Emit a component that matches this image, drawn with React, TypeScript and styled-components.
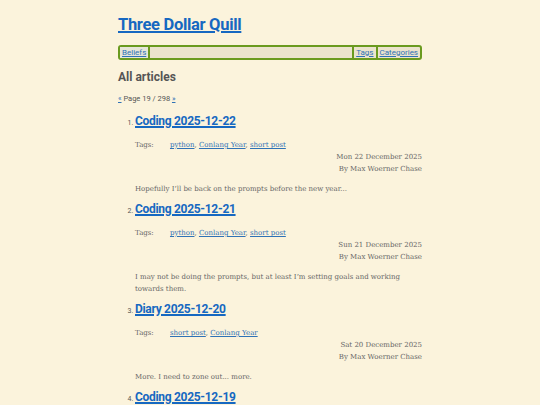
import React from 'react';
import styled, { createGlobalStyle } from 'styled-components';

const GlobalStyle = createGlobalStyle`
  html, body {
    margin: 0;
    padding: 0;
    background: #fbf3dc;
  }
  body {
    font-family: "DejaVu Serif", serif;
    color: #555;
  }
`;

const Page = styled.div`
  width: 304px;
  margin: 0 auto;
  padding-top: 14px;
`;

const SiteTitle = styled.h1`
  margin: 0;
  font-family: Roboto, "Open Sans", sans-serif;
  font-size: 16.5px;
  letter-spacing: -0.3px;
  line-height: 22px;
  font-weight: 700;
  a {
    color: #1668c1;
    text-decoration: underline;
    text-decoration-thickness: 2px;
  }
`;

const NavBar = styled.nav`
  margin-top: 9px;
  height: 11px;
  display: flex;
  align-items: stretch;
  border: 2px solid #6a9a1f;
  border-radius: 3px;
  background: #ebe3cd;
  font-family: Roboto, "Open Sans", sans-serif;
  font-size: 8px;
  line-height: 11px;
`;

const NavLink = styled.a<{ $current?: boolean }>`
  padding: 0 2px;
  color: #2f72b6;
  text-decoration: underline;
  background: ${({ $current }) => ($current ? '#e6e6d8' : 'transparent')};
`;

const NavSep = styled.span`
  width: 2px;
  background: #6a9a1f;
`;

const NavSpacer = styled.span`
  flex: 1;
`;

const SectionTitle = styled.h2`
  margin: 9px 0 0;
  font-family: Roboto, "Open Sans", sans-serif;
  font-size: 12px;
  line-height: 16px;
  font-weight: 700;
  color: #555;
`;

const Pager = styled.p`
  margin: 9px 0 0;
  font-family: Roboto, "Open Sans", sans-serif;
  font-size: 7.5px;
  line-height: 10px;
  color: #555;
  a {
    color: #2f72b6;
  }
`;

const ArticleList = styled.ol`
  margin: 6px 0 0;
  padding-left: 17px;
`;

const Article = styled.li`
  font-family: Roboto, "Open Sans", sans-serif;
  margin-bottom: 3px;
  &::marker {
    font-size: 7px;
    color: #555;
  }
`;

const ArticleTitle = styled.h3`
  margin: 0;
  font-size: 12px;
  letter-spacing: -0.3px;
  line-height: 22px;
  font-weight: 700;
  a {
    color: #1668c1;
    text-decoration-thickness: 1.5px;
  }
`;

const Meta = styled.div`
  margin-top: 7px;
  font-family: "DejaVu Serif", serif;
  font-size: 7px;
  line-height: 12px;
  color: #666;
`;

const TagRow = styled.div`
  display: flex;
  a {
    color: #2f72b6;
  }
`;

const TagLabel = styled.span`
  width: 35px;
  flex: none;
`;

const Byline = styled.div`
  text-align: right;
`;

const Summary = styled.p`
  margin: 8px 0 0;
  font-family: "DejaVu Serif", serif;
  font-size: 7px;
  line-height: 12px;
  color: #666;
`;

type Post = {
  title: string;
  tags: string[];
  date: string;
  summary: string;
};

const posts: Post[] = [
  {
    title: 'Coding 2025-12-22',
    tags: ['python', 'Conlang Year', 'short post'],
    date: 'Mon 22 December 2025',
    summary: 'Hopefully I\u2019ll be back on the prompts before the new year...',
  },
  {
    title: 'Coding 2025-12-21',
    tags: ['python', 'Conlang Year', 'short post'],
    date: 'Sun 21 December 2025',
    summary:
      'I may not be doing the prompts, but at least I\u2019m setting goals and working towards them.',
  },
  {
    title: 'Diary 2025-12-20',
    tags: ['short post', 'Conlang Year'],
    date: 'Sat 20 December 2025',
    summary: 'More. I need to zone out... more.',
  },
  {
    title: 'Coding 2025-12-19',
    tags: ['python', 'Conlang Year', 'short post'],
    date: 'Fri 19 December 2025',
    summary: 'Still going.',
  },
];

export default function App() {
  return (
    <>
      <GlobalStyle />
      <Page>
        <SiteTitle>
          <a href="#">Three Dollar Quill</a>
        </SiteTitle>
        <NavBar>
          <NavLink href="#" $current>
            Beliefs
          </NavLink>
          <NavSep />
          <NavSpacer />
          <NavSep />
          <NavLink href="#">Tags</NavLink>
          <NavSep />
          <NavLink href="#">Categories</NavLink>
        </NavBar>
        <SectionTitle>All articles</SectionTitle>
        <Pager>
          <a href="#">&laquo;</a> Page 19 / 298 <a href="#">&raquo;</a>
        </Pager>
        <ArticleList>
          {posts.map((post) => (
            <Article key={post.title}>
              <ArticleTitle>
                <a href="#">{post.title}</a>
              </ArticleTitle>
              <Meta>
                <TagRow>
                  <TagLabel>Tags:</TagLabel>
                  <span>
                    {post.tags.map((tag, i) => (
                      <React.Fragment key={tag}>
                        {i > 0 && ', '}
                        <a href="#">{tag}</a>
                      </React.Fragment>
                    ))}
                  </span>
                </TagRow>
                <Byline>{post.date}</Byline>
                <Byline>By Max Woerner Chase</Byline>
              </Meta>
              <Summary>{post.summary}</Summary>
            </Article>
          ))}
        </ArticleList>
      </Page>
    </>
  );
}
